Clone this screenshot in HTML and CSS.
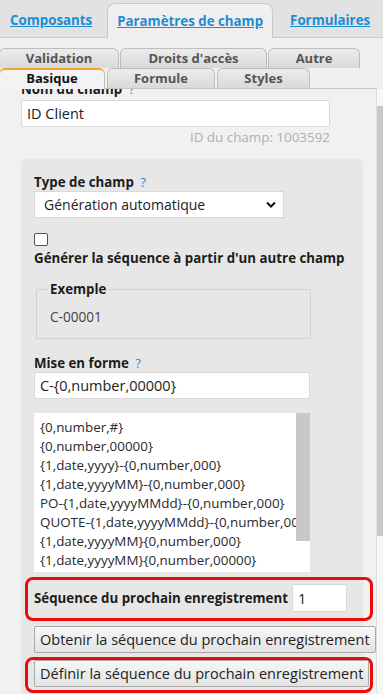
FILE: index.html
```html
<!DOCTYPE html>
<html lang="fr">
<head>
    <meta charset="UTF-8">
    <meta name="viewport" content="width=device-width, initial-scale=1.0">
    <title>Paramètres de champ</title>
    <link rel="stylesheet" href="styles.css">
</head>
<body>
<div class="tabbar">
    <a href="#" class="tab tab-first">Composants</a>
    <a href="#" class="tab tab-active">Paramètres de champ</a>
    <a href="#" class="tab tab-last">Formulaires</a>
</div>

<div class="subtabs">
    <div class="subrow">
        <div class="subtab w-validation">Validation</div>
        <div class="subtab w-droits">Droits d'accès</div>
        <div class="subtab w-autre">Autre</div>
    </div>
    <div class="subrow subrow-front">
        <div class="subtab subtab-active w-basique">Basique</div>
        <div class="subtab w-formule">Formule</div>
        <div class="subtab w-styles">Styles</div>
    </div>
</div>

<div class="content">
    <div class="scroll">
        <div class="scroll-inner">
            <label class="field-label">Nom du champ <span class="help">?</span></label>
            <input type="text" class="text-input name-input" value="ID Client">
            <div class="field-id">ID du champ: 1003592</div>

            <div class="group">
                <label class="field-label">Type de champ <span class="help">?</span></label>
                <div class="select">
                    <span>Génération automatique</span>
                    <svg width="10" height="7" viewBox="0 0 10 7">
                        <path d="M1 1.5 L5 5.5 L9 1.5" fill="none" stroke="#111" stroke-width="2"/>
                    </svg>
                </div>

                <div class="checkbox"></div>
                <label class="field-label check-label">Générer la séquence à partir d'un autre champ</label>

                <fieldset class="example">
                    <legend>Exemple</legend>
                    <div class="example-value">C-00001</div>
                </fieldset>

                <label class="field-label">Mise en forme <span class="help">?</span></label>
                <input type="text" class="text-input format-input" value="C-{0,number,00000}">

                <div class="listbox">
                    <div class="list-items">
                        <div>{0,number,#}</div>
                        <div>{0,number,00000}</div>
                        <div>{1,date,yyyy}-{0,number,000}</div>
                        <div>{1,date,yyyyMM}-{0,number,000}</div>
                        <div>PO-{1,date,yyyyMMdd}-{0,number,000}</div>
                        <div>QUOTE-{1,date,yyyyMMdd}-{0,number,000}</div>
                        <div>{1,date,yyyyMM}{0,number,000}</div>
                        <div>{1,date,yyyyMM}{0,number,00000}</div>
                    </div>
                    <div class="list-scroll"><div class="list-thumb"></div></div>
                </div>

                <div class="highlight seq-row">
                    <label class="field-label">Séquence du prochain enregistrement</label>
                    <input type="text" class="text-input seq-input" value="1">
                </div>

                <button class="btn btn-get">Obtenir la séquence du prochain enregistrement</button>

                <div class="highlight set-row">
                    <button class="btn">Définir la séquence du prochain enregistrement</button>
                </div>
            </div>
        </div>
    </div>
    <div class="scrollbar"><div class="thumb"></div></div>
</div>
</body>
</html>
```

FILE: styles.css
```css
body {
    margin: 0;
    font-family: "Open Sans", "Liberation Sans", sans-serif;
    background: #f1f1f1;
    color: #222;
    width: 383px;
    height: 694px;
    overflow: hidden;
}

/* top tabs */
.tabbar {
    display: flex;
    align-items: flex-end;
    height: 37px;
    background: #e2e2e2;
    border-bottom: 1px solid #cacaca;
}

.tab {
    display: block;
    height: 35px;
    line-height: 35px;
    box-sizing: border-box;
    font-size: 13.3px;
    font-weight: bold;
    color: #1d8cd3;
    text-decoration: underline;
    white-space: nowrap;
    margin-bottom: -1px;
}

.tab-first {
    padding: 0 10px;
}

.tab-active {
    margin-left: 5px;
    padding: 0 9px;
    background: #efefef;
    border: 1px solid #c9c9c9;
    border-bottom: none;
    border-radius: 8px 8px 0 0;
}

.tab-last {
    margin-left: 7px;
    padding: 0 10px;
}

/* sub tabs */
.subtabs {
    padding-top: 10px;
    background: #f0f0f0;
}

.subrow {
    display: flex;
    gap: 1px;
    height: 20px;
}

.subrow-front {
    border-bottom: 1px solid #c4c4c4;
    width: 377px;
    gap: 2px;
}

.subtab {
    height: 20px;
    box-sizing: border-box;
    border: 1px solid #bdbdbd;
    border-bottom: none;
    border-radius: 6px 6px 0 0;
    background: linear-gradient(#ececec, #d9d9d9);
    font-size: 13px;
    font-weight: bold;
    color: #555;
    line-height: 18px;
    text-align: center;
}

.subtab-active {
    background: #f3f3f3;
    border-top: 2px solid #f3a530;
    color: #111;
    line-height: 17px;
    height: 21px;
}

.w-validation { width: 120px; margin-left: -1px; }
.w-droits { width: 147px; }
.w-autre { width: 92px; }
.w-basique { width: 106px; margin-left: -1px; }
.w-formule { width: 108px; }
.w-styles { width: 93px; }

/* content */
.content {
    display: flex;
    height: 606px;
}

.scroll {
    width: 377px;
    overflow: hidden;
    padding-left: 21px;
    box-sizing: border-box;
}

.scroll-inner {
    margin-top: -9px;
}

.scrollbar {
    width: 6px;
    background: #f7f7f7;
    border-left: 1px solid #e0e0e0;
    padding-top: 17px;
}

.thumb {
    height: 430px;
    background: #c8c8c8;
}

.field-label {
    display: block;
    font-size: 13.3px;
    font-weight: bold;
    line-height: 19px;
    color: #1c1c1c;
    white-space: nowrap;
}

.help {
    color: #2b8fd3;
    font-weight: normal;
    margin-left: 3px;
}

.text-input {
    display: block;
    box-sizing: border-box;
    height: 27px;
    border: 1px solid #d8d8d8;
    border-radius: 2px;
    background: white;
    font-family: inherit;
    font-size: 14.5px;
    color: #222;
    padding: 0 5px;
}

.name-input {
    width: 309px;
    margin-top: 1px;
}

.field-id {
    width: 309px;
    text-align: right;
    font-size: 13.4px;
    line-height: 18px;
    color: #b0b0b0;
    margin-top: 1px;
}

.group {
    margin-top: 13px;
    width: 342px;
    box-sizing: border-box;
    background: #e7e7e7;
    border-radius: 5px 5px 0 0;
    padding: 14px 13px 0 13px;
    min-height: 540px;
}

.group .field-label {
    line-height: 18px;
}

.select {
    display: flex;
    align-items: center;
    justify-content: space-between;
    width: 250px;
    height: 27px;
    box-sizing: border-box;
    background: white;
    border: 1px solid #d8d8d8;
    padding: 0 7px 0 9px;
    font-size: 14px;
    color: #222;
}

.checkbox {
    width: 12px;
    height: 11px;
    border: 1px solid #555;
    border-radius: 2px;
    background: white;
    margin-top: 15px;
}

.check-label {
    margin-top: 3px;
}

.example {
    margin: 13px 0 0 2px;
    width: 275px;
    box-sizing: border-box;
    border: 1px solid #d2d2d2;
    padding: 0 11px 12px 11px;
}

.example legend {
    font-size: 13.3px;
    font-weight: bold;
    color: #1c1c1c;
    padding: 0 2px;
    line-height: 18px;
}

.example-value {
    font-size: 13.6px;
    line-height: 18px;
    color: #444;
    padding-left: 2px;
    margin-top: 10px;
}

.group .example + .field-label {
    margin-top: 15px;
}

.format-input {
    width: 276px;
}

.listbox {
    display: flex;
    width: 276px;
    height: 159px;
    margin-top: 14px;
    background: white;
}

.list-items {
    width: 262px;
    overflow: hidden;
    white-space: nowrap;
    padding: 5px 0 0 6px;
    box-sizing: border-box;
    font-size: 13.4px;
    line-height: 19px;
    color: #2a2a2a;
}

.list-scroll {
    width: 14px;
    background: white;
}

.list-thumb {
    height: 128px;
    background: #c8c8c8;
}

.highlight {
    width: 348px;
    box-sizing: border-box;
    margin-left: -9px;
    border: 3px solid #ec0b0b;
    border-radius: 8px;
}

.seq-row {
    display: flex;
    align-items: center;
    gap: 4px;
    margin-top: 5px;
    padding: 4px 6px 6px 6px;
}

.seq-input {
    width: 55px;
    height: 28px;
}

.btn {
    display: block;
    height: 27px;
    box-sizing: border-box;
    border: 1px solid #a9a9a9;
    border-radius: 2px;
    background: linear-gradient(#f7f7f7, #e3e3e3);
    font-family: inherit;
    font-size: 14.5px;
    color: #222;
    padding: 0 5px;
    white-space: nowrap;
}

.btn-get {
    margin-top: 5px;
}

.set-row {
    margin-top: 4px;
    padding: 0 1px 3px 6px;
}
```
